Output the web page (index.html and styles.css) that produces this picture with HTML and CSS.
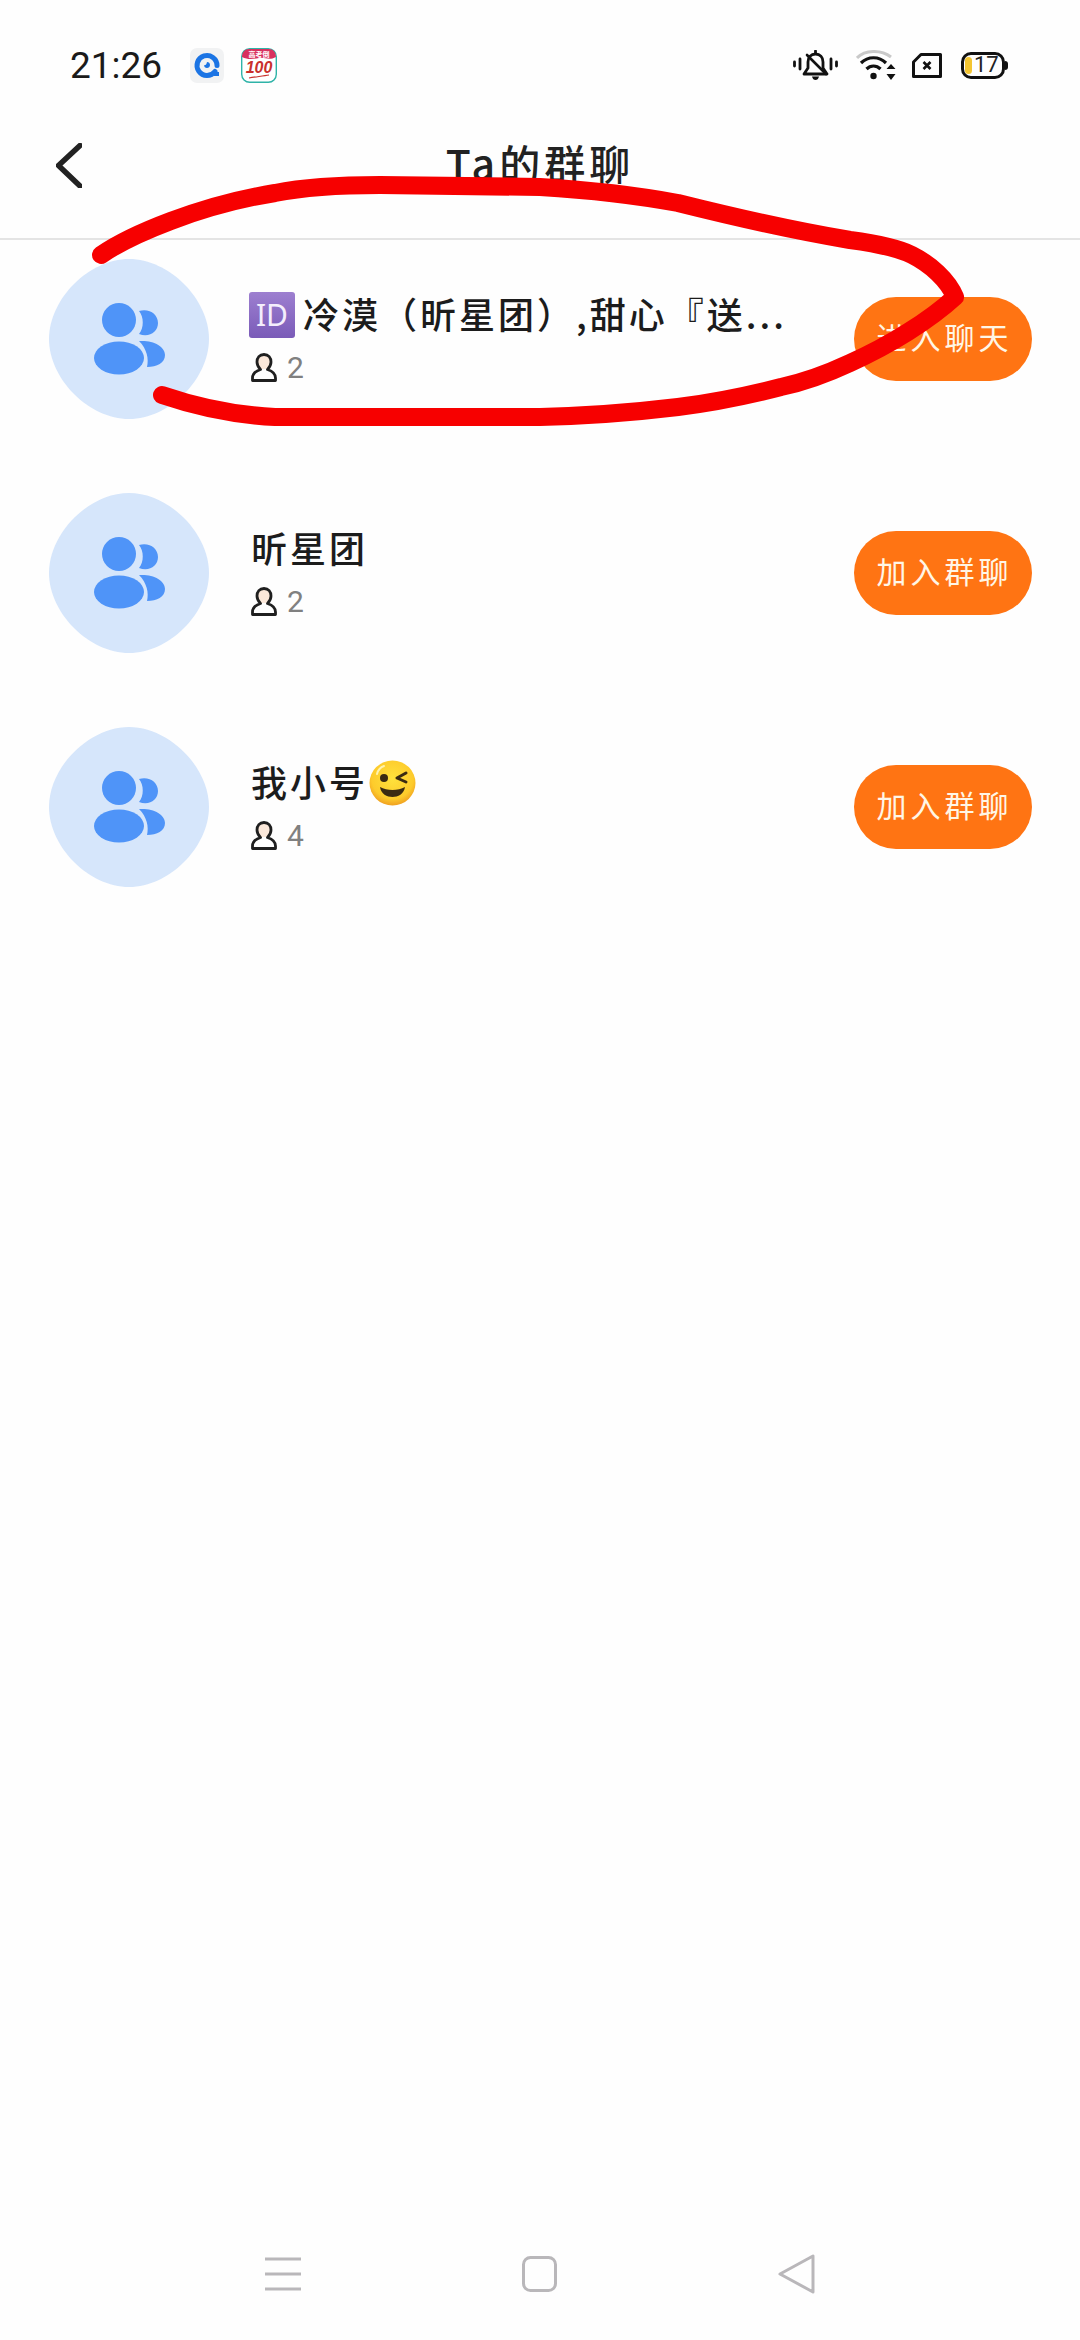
FILE: index.html
```html
<!DOCTYPE html>
<html lang="zh-CN">
<head>
    <meta charset="UTF-8">
    <meta name="viewport" content="width=device-width, initial-scale=1.0">
    <title>Ta的群聊</title>
    <link rel="stylesheet" href="styles.css">
</head>
<body>
    <svg width="0" height="0" class="defs">
        <defs>
            <symbol id="avatar" viewBox="0 0 160 160">
                <path fill="#d6e6fb" d="M80 0C120 0 160 40 160 80C160 120 120 160 80 160C40 160 0 120 0 80C0 40 40 0 80 0Z"/>
                <circle cx="70" cy="61" r="17" fill="#4f94f8"/>
                <ellipse cx="70" cy="99" rx="25" ry="16.5" fill="#4f94f8"/>
                <path fill="#4f94f8" d="M90 52C100 49 109 55 109 64C109 73 100 79 90 75C95 69 95 58 90 52Z"/>
                <path fill="#4f94f8" d="M90 82C104 81 116 87 116 96C116 104 108 108 98 108C100 100 98 90 90 82Z"/>
            </symbol>
            <symbol id="person" viewBox="0 0 26 29">
                <path fill="#fbe8da" d="M13 2C8.500 2 6.500 5.500 6.500 9C6.500 12 8 14.500 9.500 16H16.500C18 14.500 19.500 12 19.500 9C19.500 5.500 17.500 2 13 2Z"/>
                <path fill="none" stroke="#1f1f1f" stroke-width="2.800" stroke-linejoin="round" d="M13 1.500C8.500 1.500 6 5 6 9C6 12 7.500 14.500 9.500 16.500C5 18 1.500 21 1.500 25V27.500H24.500V25C24.500 21 21 18 16.500 16.500C18.500 14.500 20 12 20 9C20 5 17.500 1.500 13 1.500Z"/>
            </symbol>
        </defs>
    </svg>

    <div class="status-bar">
        <span class="time">21:26</span>
        <svg class="app-icon" width="34" height="35" viewBox="0 0 34 35">
            <rect width="34" height="35" rx="7" fill="#f1f2f3"/>
            <path fill="none" stroke="#1b74e4" stroke-width="5" stroke-linecap="round" d="M25 23.500A10 10 0 1 1 27 17.500"/>
            <path fill="#1b74e4" d="M17 14c1.800 0 3 1.200 3 3s-1.400 3-3 3-3-1.200-3-3c1 .600 2.500 0 3-3Z"/>
            <path fill="none" stroke="#1b74e4" stroke-width="4" d="M24 26h5"/>
        </svg>
        <svg class="app-icon calendar" width="36" height="35" viewBox="0 0 36 35">
            <rect x="0.700" y="0.700" width="34.600" height="33.600" rx="8" fill="#fff" stroke="#2fb3a8" stroke-width="1.400"/>
            <path fill="#d8315f" d="M1 9C1 4 4 1 8 1H28C32 1 35 4 35 9C28 13 24 9 18 10C12 11 7 12 1 9Z"/>
            <text x="18" y="8.500" class="calendar-top">高考倒</text>
            <text x="18" y="25" class="calendar-num">100</text>
            <path fill="none" stroke="#c9302c" stroke-width="1.200" d="M8 30C14 29 22 28 28 27"/>
        </svg>

        <div class="status-right">
            <svg class="bell" width="45" height="30" viewBox="0 0 45 30">
                <g fill="none" stroke="#111" stroke-width="2.800" stroke-linecap="round" stroke-linejoin="round">
                    <path d="M1.500 12V16M7 9V19M38 9V19M43.500 12V16"/>
                    <path d="M11 24H34L30 18V12C30 7 27 4 22.500 4C18 4 15 7 15 12V18Z"/>
                    <path d="M14 5L33 24" stroke-width="2.600"/>
                    <path d="M22.500 1V3"/>
                </g>
                <path fill="#111" d="M19 26.500H26C25.500 29 24 30 22.500 30C21 30 19.500 29 19 26.500Z"/>
            </svg>
            <svg width="40" height="30" viewBox="0 0 40 30">
                <path fill="none" stroke="#c9c9c9" stroke-width="3" d="M1 8C9 -0.500 25 -0.500 35 7"/>
                <g fill="none" stroke="#111" stroke-width="3.200">
                    <path d="M5 13C12 6 23 6 30 13"/>
                    <path d="M10.500 19C14.500 15 20.500 15 24.500 19"/>
                </g>
                <circle cx="17.500" cy="26" r="3.200" fill="#111"/>
                <path fill="#111" d="M35 14L39.500 19H30.500ZM35 30L30.500 24H39.500Z"/>
            </svg>
            <svg width="30" height="25" viewBox="0 0 30 25">
                <path fill="none" stroke="#111" stroke-width="3" stroke-linejoin="round" d="M9 1.500H28.500V23.500H1.500V9Z"/>
                <path fill="none" stroke="#111" stroke-width="2.600" d="M11.500 9L18.500 16M18.500 9L11.500 16"/>
            </svg>
            <div class="battery">
                <span class="battery-fill"></span>
                <span class="battery-num">17</span>
            </div>
        </div>
    </div>

    <div class="header">
        <svg class="back" width="26" height="45" viewBox="0 0 26 45">
            <path fill="none" stroke="#222" stroke-width="5.500" stroke-linecap="round" stroke-linejoin="round" d="M24 2.500L2.500 22.500L24 43"/>
        </svg>
        <div class="title">Ta的群聊</div>
    </div>

    <div class="group-list">
        <div class="group-item">
            <svg class="avatar" width="160" height="160"><use href="#avatar"/></svg>
            <div class="group-info">
                <div class="group-name first"><span class="id-badge">ID</span><span class="first-text">冷漠（昕星团）,甜心『送...</span></div>
                <div class="group-count"><svg width="26" height="29"><use href="#person"/></svg><span>2</span></div>
            </div>
            <button class="join-btn">进入聊天</button>
        </div>

        <div class="group-item">
            <svg class="avatar" width="160" height="160"><use href="#avatar"/></svg>
            <div class="group-info">
                <div class="group-name">昕星团</div>
                <div class="group-count"><svg width="26" height="29"><use href="#person"/></svg><span>2</span></div>
            </div>
            <button class="join-btn">加入群聊</button>
        </div>

        <div class="group-item">
            <svg class="avatar" width="160" height="160"><use href="#avatar"/></svg>
            <div class="group-info">
                <div class="group-name">我小号<svg class="wink" width="47" height="46" viewBox="0 0 47 46">
                    <defs>
                        <radialGradient id="winkFace" cx="50%" cy="40%" r="60%">
                            <stop offset="0" stop-color="#ffe23c"/>
                            <stop offset="0.750" stop-color="#fdcb2c"/>
                            <stop offset="1" stop-color="#f0a020"/>
                        </radialGradient>
                    </defs>
                    <ellipse cx="23.500" cy="23" rx="23" ry="22.500" fill="url(#winkFace)"/>
                    <circle cx="15" cy="18" r="4" fill="#3a2a12"/>
                    <path fill="none" stroke="#3a2a12" stroke-width="3" stroke-linecap="round" stroke-linejoin="round" d="M37 13L28 18L37 22"/>
                    <path fill="#3a2a12" d="M11 27C18 31 29 31 36 27C35 34 29 37 23.500 37C18 37 12 34 11 27Z"/>
                    <path fill="none" stroke="#fff3b0" stroke-width="2" stroke-linecap="round" d="M8 14C9 10 12 7 15 6"/>
                </svg></div>
                <div class="group-count"><svg width="26" height="29"><use href="#person"/></svg><span>4</span></div>
            </div>
            <button class="join-btn">加入群聊</button>
        </div>
    </div>

    <div class="nav-bar">
        <svg width="36" height="40" viewBox="0 0 36 40">
            <path fill="none" stroke="#b9b7ba" stroke-width="3" d="M0 5H36M0 20H36M0 35H36"/>
        </svg>
        <svg width="35" height="40" viewBox="0 0 35 40">
            <rect x="1.500" y="3.500" width="32" height="33" rx="7" fill="none" stroke="#b9b7ba" stroke-width="3"/>
        </svg>
        <svg width="37" height="40" viewBox="0 0 37 40">
            <path fill="none" stroke="#b9b7ba" stroke-width="3" stroke-linejoin="round" d="M35 2V38L2 20Z"/>
        </svg>
    </div>

    <!-- 紅色手繪圈 -->
    <svg class="scribble" width="1080" height="480" viewBox="0 0 1080 480">
        <path fill="none" stroke="#f70000" stroke-width="18" stroke-linecap="round" stroke-linejoin="round" d="M101 255C130 235 200 205 275 193C300 188 340 185 380 185L540 187C590 190 640 196 678 203C730 216 790 230 850 240C880 244 900 249 912 255C930 264 948 280 955 297C930 320 890 345 850 363C820 377 800 383 781 387C750 395 710 403 678 407C620 414 580 416 540 417L275 417C235 415 200 408 162 395"/>
    </svg>
</body>
</html>
```

FILE: styles.css
```css
* {
    box-sizing: border-box;
}

body {
    position: relative;
    display: flex;
    flex-direction: column;
    width: 1080px;
    height: 2340px;
    margin: 0;
    overflow: hidden;
    background: #fefefe;
    color: #1c1c1c;
    font-family: "Noto Sans CJK SC", "Noto Sans", sans-serif;
}

.defs {
    position: absolute;
}

.status-bar {
    display: flex;
    align-items: center;
    height: 110px;
    padding: 20px 75px 0 70px;
}

.time {
    width: 120px;
    font-family: Roboto, sans-serif;
    font-size: 37px;
    color: #1a1a1a;
}

.app-icon.calendar {
    margin-left: 17px;
}

.calendar-top {
    font-size: 7px;
    font-weight: 700;
    fill: #fff;
    text-anchor: middle;
}

.calendar-num {
    font-family: "Liberation Sans", sans-serif;
    font-size: 16px;
    font-weight: 700;
    font-style: italic;
    fill: #c9302c;
    text-anchor: middle;
}

.status-right {
    display: flex;
    align-items: center;
    gap: 16px;
    margin-left: auto;
}

.bell {
    margin-right: 2px;
}

.battery {
    position: relative;
    display: flex;
    align-items: center;
    width: 44px;
    height: 27px;
    margin-left: 3px;
    padding-left: 10px;
    border: 3px solid #111;
    border-radius: 10px;
}

.battery::after {
    content: "";
    position: absolute;
    right: -6px;
    top: 6px;
    width: 3px;
    height: 9px;
    background: #111;
    border-radius: 0 3px 3px 0;
}

.battery-fill {
    position: absolute;
    left: 1px;
    top: 2px;
    width: 7px;
    height: 17px;
    background: #f4c531;
    border-radius: 4px;
}

.battery-num {
    font-family: Roboto, sans-serif;
    font-size: 22px;
    line-height: 1;
    color: #222;
}

.header {
    display: grid;
    grid-template-columns: 1fr auto 1fr;
    align-items: center;
    height: 130px;
    padding: 0 56px 20px 56px;
    border-bottom: 2px solid #e4e4e4;
}

.back {
    margin-top: 3px;
}

.title {
    padding-bottom: 5px;
    font-size: 41px;
    font-weight: 500;
    letter-spacing: 4px;
    color: #222;
}

.group-list {
    display: flex;
    flex-direction: column;
    gap: 74px;
    padding: 19px 48px 0 49px;
}

.group-item {
    display: flex;
    align-items: center;
}

.avatar {
    flex-shrink: 0;
}

.group-info {
    display: flex;
    flex-direction: column;
    gap: 15px;
    flex: 1;
    min-width: 0;
    margin-left: 40px;
    padding-bottom: 4px;
}

.group-name {
    display: flex;
    align-items: flex-start;
    height: 46px;
    padding-left: 2px;
    font-size: 36px;
    font-weight: 500;
    line-height: 42px;
    letter-spacing: 3px;
    white-space: nowrap;
    color: #1c1c1c;
}

.id-badge {
    display: flex;
    align-items: center;
    justify-content: center;
    width: 46px;
    height: 46px;
    margin-left: -2px;
    background: linear-gradient(#9d7fd0, #7a5bb8);
    border-radius: 3px;
    font-family: "Noto Sans", sans-serif;
    font-size: 30px;
    font-weight: 400;
    letter-spacing: 0;
    color: #f4eefc;
}

.first-text {
    margin-left: 8px;
}

.wink {
    margin-left: 1px;
}

.group-count {
    display: flex;
    align-items: center;
    gap: 10px;
    height: 29px;
    padding-left: 2px;
    font-family: Roboto, sans-serif;
    font-size: 30px;
    color: #808080;
}

.join-btn {
    flex-shrink: 0;
    width: 178px;
    height: 84px;
    padding: 0 0 6px 3px;
    border: none;
    border-radius: 42px;
    background: #ff7413;
    color: #fff6e6;
    font-family: "Noto Sans CJK SC", sans-serif;
    font-size: 30px;
    letter-spacing: 4px;
}

.nav-bar {
    display: flex;
    justify-content: center;
    gap: 221px;
    margin-top: auto;
    padding-bottom: 46px;
}

.scribble {
    position: absolute;
    left: 0;
    top: 0;
}
```
